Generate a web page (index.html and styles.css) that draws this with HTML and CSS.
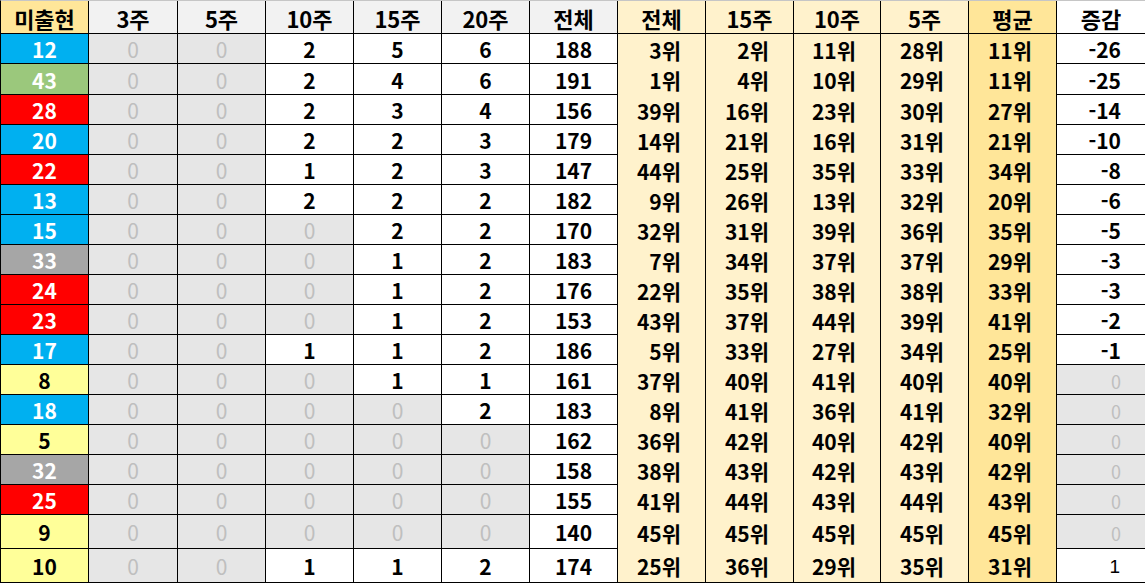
FILE: index.html
```html
<!DOCTYPE html>
<html lang="ko">
<head>
<meta charset="utf-8">
<title>미출현 통계</title>
<link rel="stylesheet" href="styles.css">
</head>
<body>
<div class="sheet">
  <div class="h gold">미출현</div><div class="h grey">3주</div><div class="h grey">5주</div><div class="h grey">10주</div><div class="h grey">15주</div><div class="h grey">20주</div><div class="h grey">전체</div><div class="h cream">전체</div><div class="h cream">15주</div><div class="h cream">10주</div><div class="h cream">5주</div><div class="h gold">평균</div><div class="h plain">증감</div>

  <div class="c ball blue">12</div><div class="c z">0</div><div class="c z">0</div><div class="c n">2</div><div class="c n">5</div><div class="c n">6</div><div class="c n">188</div><div class="c r">3위</div><div class="c r">2위</div><div class="c r">11위</div><div class="c r">28위</div><div class="c r avg">11위</div><div class="c d">-26</div>

  <div class="c ball green">43</div><div class="c z">0</div><div class="c z">0</div><div class="c n">2</div><div class="c n">4</div><div class="c n">6</div><div class="c n">191</div><div class="c r">1위</div><div class="c r">4위</div><div class="c r">10위</div><div class="c r">29위</div><div class="c r avg">11위</div><div class="c d">-25</div>

  <div class="c ball red">28</div><div class="c z">0</div><div class="c z">0</div><div class="c n">2</div><div class="c n">3</div><div class="c n">4</div><div class="c n">156</div><div class="c r">39위</div><div class="c r">16위</div><div class="c r">23위</div><div class="c r">30위</div><div class="c r avg">27위</div><div class="c d">-14</div>

  <div class="c ball blue">20</div><div class="c z">0</div><div class="c z">0</div><div class="c n">2</div><div class="c n">2</div><div class="c n">3</div><div class="c n">179</div><div class="c r">14위</div><div class="c r">21위</div><div class="c r">16위</div><div class="c r">31위</div><div class="c r avg">21위</div><div class="c d">-10</div>

  <div class="c ball red">22</div><div class="c z">0</div><div class="c z">0</div><div class="c n">1</div><div class="c n">2</div><div class="c n">3</div><div class="c n">147</div><div class="c r">44위</div><div class="c r">25위</div><div class="c r">35위</div><div class="c r">33위</div><div class="c r avg">34위</div><div class="c d">-8</div>

  <div class="c ball blue">13</div><div class="c z">0</div><div class="c z">0</div><div class="c n">2</div><div class="c n">2</div><div class="c n">2</div><div class="c n">182</div><div class="c r">9위</div><div class="c r">26위</div><div class="c r">13위</div><div class="c r">32위</div><div class="c r avg">20위</div><div class="c d">-6</div>

  <div class="c ball blue">15</div><div class="c z">0</div><div class="c z">0</div><div class="c z">0</div><div class="c n">2</div><div class="c n">2</div><div class="c n">170</div><div class="c r">32위</div><div class="c r">31위</div><div class="c r">39위</div><div class="c r">36위</div><div class="c r avg">35위</div><div class="c d">-5</div>

  <div class="c ball gray">33</div><div class="c z">0</div><div class="c z">0</div><div class="c z">0</div><div class="c n">1</div><div class="c n">2</div><div class="c n">183</div><div class="c r">7위</div><div class="c r">34위</div><div class="c r">37위</div><div class="c r">37위</div><div class="c r avg">29위</div><div class="c d">-3</div>

  <div class="c ball red">24</div><div class="c z">0</div><div class="c z">0</div><div class="c z">0</div><div class="c n">1</div><div class="c n">2</div><div class="c n">176</div><div class="c r">22위</div><div class="c r">35위</div><div class="c r">38위</div><div class="c r">38위</div><div class="c r avg">33위</div><div class="c d">-3</div>

  <div class="c ball red">23</div><div class="c z">0</div><div class="c z">0</div><div class="c z">0</div><div class="c n">1</div><div class="c n">2</div><div class="c n">153</div><div class="c r">43위</div><div class="c r">37위</div><div class="c r">44위</div><div class="c r">39위</div><div class="c r avg">41위</div><div class="c d">-2</div>

  <div class="c ball blue">17</div><div class="c z">0</div><div class="c z">0</div><div class="c n">1</div><div class="c n">1</div><div class="c n">2</div><div class="c n">186</div><div class="c r">5위</div><div class="c r">33위</div><div class="c r">27위</div><div class="c r">34위</div><div class="c r avg">25위</div><div class="c d">-1</div>

  <div class="c ball yellow">8</div><div class="c z">0</div><div class="c z">0</div><div class="c z">0</div><div class="c n">1</div><div class="c n">1</div><div class="c n">161</div><div class="c r">37위</div><div class="c r">40위</div><div class="c r">41위</div><div class="c r">40위</div><div class="c r avg">40위</div><div class="c d dz">0</div>

  <div class="c ball blue">18</div><div class="c z">0</div><div class="c z">0</div><div class="c z">0</div><div class="c z">0</div><div class="c n">2</div><div class="c n">183</div><div class="c r">8위</div><div class="c r">41위</div><div class="c r">36위</div><div class="c r">41위</div><div class="c r avg">32위</div><div class="c d dz">0</div>

  <div class="c ball yellow">5</div><div class="c z">0</div><div class="c z">0</div><div class="c z">0</div><div class="c z">0</div><div class="c z">0</div><div class="c n">162</div><div class="c r">36위</div><div class="c r">42위</div><div class="c r">40위</div><div class="c r">42위</div><div class="c r avg">40위</div><div class="c d dz">0</div>

  <div class="c ball gray">32</div><div class="c z">0</div><div class="c z">0</div><div class="c z">0</div><div class="c z">0</div><div class="c z">0</div><div class="c n">158</div><div class="c r">38위</div><div class="c r">43위</div><div class="c r">42위</div><div class="c r">43위</div><div class="c r avg">42위</div><div class="c d dz">0</div>

  <div class="c ball red">25</div><div class="c z">0</div><div class="c z">0</div><div class="c z">0</div><div class="c z">0</div><div class="c z">0</div><div class="c n">155</div><div class="c r">41위</div><div class="c r">44위</div><div class="c r">43위</div><div class="c r">44위</div><div class="c r avg">43위</div><div class="c d dz">0</div>

  <div class="c ball yellow">9</div><div class="c z">0</div><div class="c z">0</div><div class="c z">0</div><div class="c z">0</div><div class="c z">0</div><div class="c n">140</div><div class="c r">45위</div><div class="c r">45위</div><div class="c r">45위</div><div class="c r">45위</div><div class="c r avg">45위</div><div class="c d dz">0</div>

  <div class="c ball yellow">10</div><div class="c z">0</div><div class="c z">0</div><div class="c n">1</div><div class="c n">1</div><div class="c n">2</div><div class="c n">174</div><div class="c r end">25위</div><div class="c r end">36위</div><div class="c r end">29위</div><div class="c r end">35위</div><div class="c r avg end">31위</div><div class="c d thin">1</div>
</div>
</body>
</html>
```
FILE: styles.css
```css
* { box-sizing: border-box; }

html, body {
  margin: 0;
  padding: 0;
  background: #ffffff;
}

.sheet {
  display: grid;
  width: 1145px;
  grid-template-columns: 88px 89px 88px 88px 88px 88px 88px 88px 88px 87px 88px 88px 88px;
  grid-template-rows: 33px 30px 31px repeat(14, 30px) 34px 34px;
  border-top: 1px solid #c6c6c6;
  border-left: 1px solid #000;
  font-family: "Noto Sans CJK KR", "Noto Sans", sans-serif;
  font-weight: 700;
  font-size: 21px;
  color: #000;
}

.sheet > div {
  border-right: 1px solid #000;
  border-bottom: 1px solid #000;
  display: flex;
  align-items: center;
  justify-content: center;
  padding-top: 2px;
  line-height: 1;
  white-space: nowrap;
}

.sheet > div:nth-child(13n) { border-right: none; }

.h { font-size: 22px; }
.h.gold { background: #ffe699; }
.h.grey { background: #f2f2f2; }
.h.cream { background: #fff2cc; }
.h.plain { background: #ffffff; }

.ball { color: #fff; }
.ball.blue { background: #00b0f0; }
.ball.green { background: #9bc87c; }
.ball.red { background: #ff0000; }
.ball.gray { background: #a6a6a6; }
.ball.yellow { background: #ffff99; color: #000; }

.z {
  background: #e6e6e6;
  color: #bfbfbf;
  font-weight: 400;
}

.n { background: #ffffff; }

.sheet > .r {
  background: #fff2cc;
  justify-content: flex-end;
  padding-right: 24px;
  border-bottom: none;
}
.sheet > .r.avg { background: #ffe699; }
.sheet > .r.end { border-bottom: 1px solid #000; }

.sheet > .d {
  justify-content: flex-end;
  padding-right: 24px;
  background: #ffffff;
}
.sheet > .d.dz {
  background: #e6e6e6;
  color: #bfbfbf;
  font-weight: 400;
  font-size: 18px;
}
.sheet > .d.thin {
  font-family: "Liberation Sans", "Noto Sans", sans-serif;
  font-weight: 400;
  font-size: 19px;
  padding-right: 25px;
}
```
